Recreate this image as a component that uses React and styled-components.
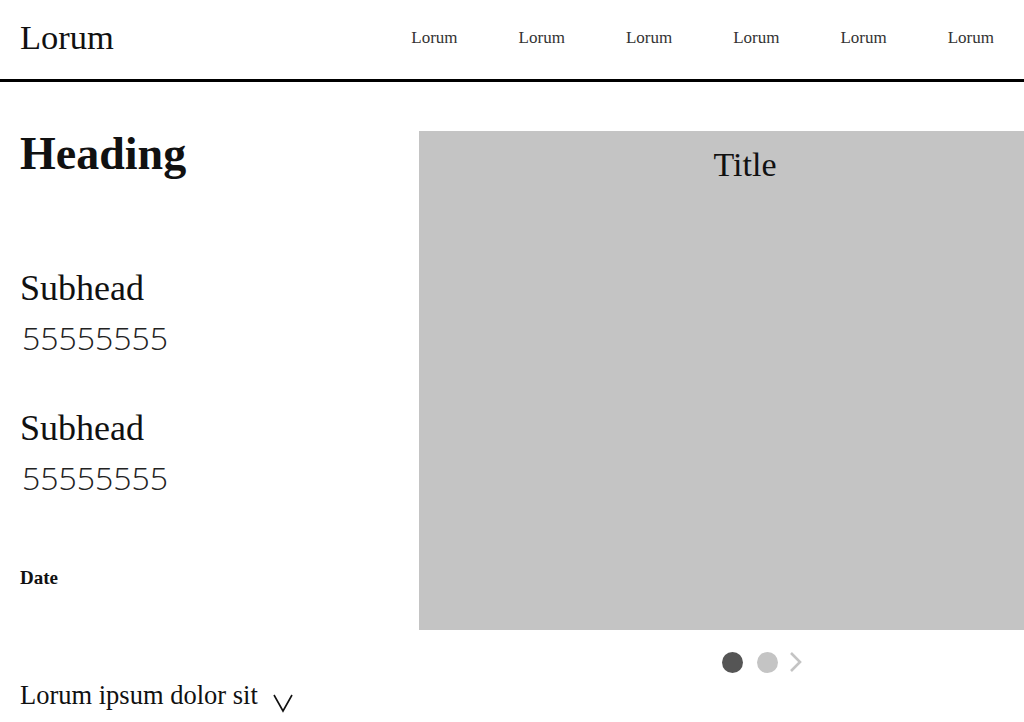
import React from "react";
import styled, { createGlobalStyle } from "styled-components";

const GlobalStyle = createGlobalStyle`
  html, body {
    margin: 0;
    padding: 0;
    background: #ffffff;
    overflow: hidden;
  }
  body {
    font-family: "Liberation Serif", serif;
    color: #111;
  }
`;

const navItems = ["Lorum", "Lorum", "Lorum", "Lorum", "Lorum", "Lorum"];

const contacts = [
  { label: "Subhead", value: "55555555" },
  { label: "Subhead", value: "55555555" },
];

const App = () => {
  return (
    <>
      <GlobalStyle />
      <Page>
        <Header>
          <Logo>Lorum</Logo>
          <Nav>
            {navItems.map((item, i) => (
              <NavLink key={i}>{item}</NavLink>
            ))}
          </Nav>
        </Header>
        <Main>
          <Side>
            <Heading>Heading</Heading>
            {contacts.map((c, i) => (
              <Contact key={i} first={i === 0}>
                <Subhead>{c.label}</Subhead>
                <Number>{c.value}</Number>
              </Contact>
            ))}
            <DateLabel>Date</DateLabel>
            <Dropdown>
              <span>Lorum ipsum dolor sit</span>
              <svg width="22" height="20" viewBox="0 0 22 20">
                <polyline
                  points="2,2 11,18 20,2"
                  fill="none"
                  stroke="#111"
                  strokeWidth="1.6"
                />
              </svg>
            </Dropdown>
          </Side>
          <Gallery>
            <Panel>
              <Title>Title</Title>
            </Panel>
            <Pager>
              <Dot active />
              <Dot />
              <svg width="14" height="22" viewBox="0 0 14 22">
                <polyline
                  points="2,2 11,11 2,20"
                  fill="none"
                  stroke="#c4c4c4"
                  strokeWidth="2.6"
                />
              </svg>
            </Pager>
          </Gallery>
        </Main>
      </Page>
    </>
  );
};

const Page = styled.div`
  width: 1024px;
  height: 722px;
  overflow: hidden;
`;

const Header = styled.header`
  height: 82px;
  border-bottom: 3px solid #000;
  display: flex;
  justify-content: space-between;
  align-items: flex-start;
  padding: 20px 30px 0 20px;
  box-sizing: border-box;
`;

const Logo = styled.div`
  font-size: 34.5px;
  line-height: 34px;
  color: #111;
`;

const Nav = styled.nav`
  display: flex;
  gap: 61px;
  margin-top: 9px;
`;

const NavLink = styled.a`
  font-size: 17px;
  line-height: 17px;
  color: #333;
  cursor: pointer;
`;

const Main = styled.main`
  display: flex;
  padding-top: 49px;
`;

const Side = styled.section`
  width: 419px;
  flex-shrink: 0;
  padding-left: 20px;
  box-sizing: border-box;
  display: flex;
  flex-direction: column;
  align-items: flex-start;
`;

const Heading = styled.h1`
  margin: 0;
  font-size: 46px;
  line-height: 46px;
  font-weight: 700;
`;

const Contact = styled.div`
  margin-top: ${(p) => (p.first ? "93px" : "56px")};
`;

const Subhead = styled.h2`
  margin: 0;
  font-size: 36px;
  line-height: 36px;
  font-weight: 400;
`;

const Number = styled.div`
  margin-top: 16px;
  font-family: "Open Sans", sans-serif;
  font-weight: 300;
  font-size: 32px;
  line-height: 32px;
  color: #222;
  padding-left: 2px;
`;

const DateLabel = styled.div`
  margin-top: 74px;
  font-size: 19px;
  line-height: 19px;
  font-weight: 700;
`;

const Dropdown = styled.div`
  margin-top: 95px;
  display: flex;
  align-items: flex-end;
  gap: 14px;
  font-size: 26.5px;
  line-height: 26px;
  cursor: pointer;

  svg {
    margin-bottom: -5px;
  }
`;

const Gallery = styled.section`
  width: 652px;
  flex-shrink: 0;
`;

const Panel = styled.div`
  height: 499px;
  background: #c4c4c4;
  display: flex;
  justify-content: center;
  padding-top: 17px;
  box-sizing: border-box;
`;

const Title = styled.h3`
  margin: 0;
  font-size: 34px;
  line-height: 34px;
  font-weight: 400;
`;

const Pager = styled.div`
  display: flex;
  justify-content: center;
  align-items: center;
  gap: 14px;
  margin-top: 21px;
  padding-left: 34px;

  svg {
    margin-left: -3px;
  }
`;

const Dot = styled.span`
  width: 21px;
  height: 21px;
  border-radius: 50%;
  background: ${(p) => (p.active ? "#555555" : "#c4c4c4")};
`;

export default App;
